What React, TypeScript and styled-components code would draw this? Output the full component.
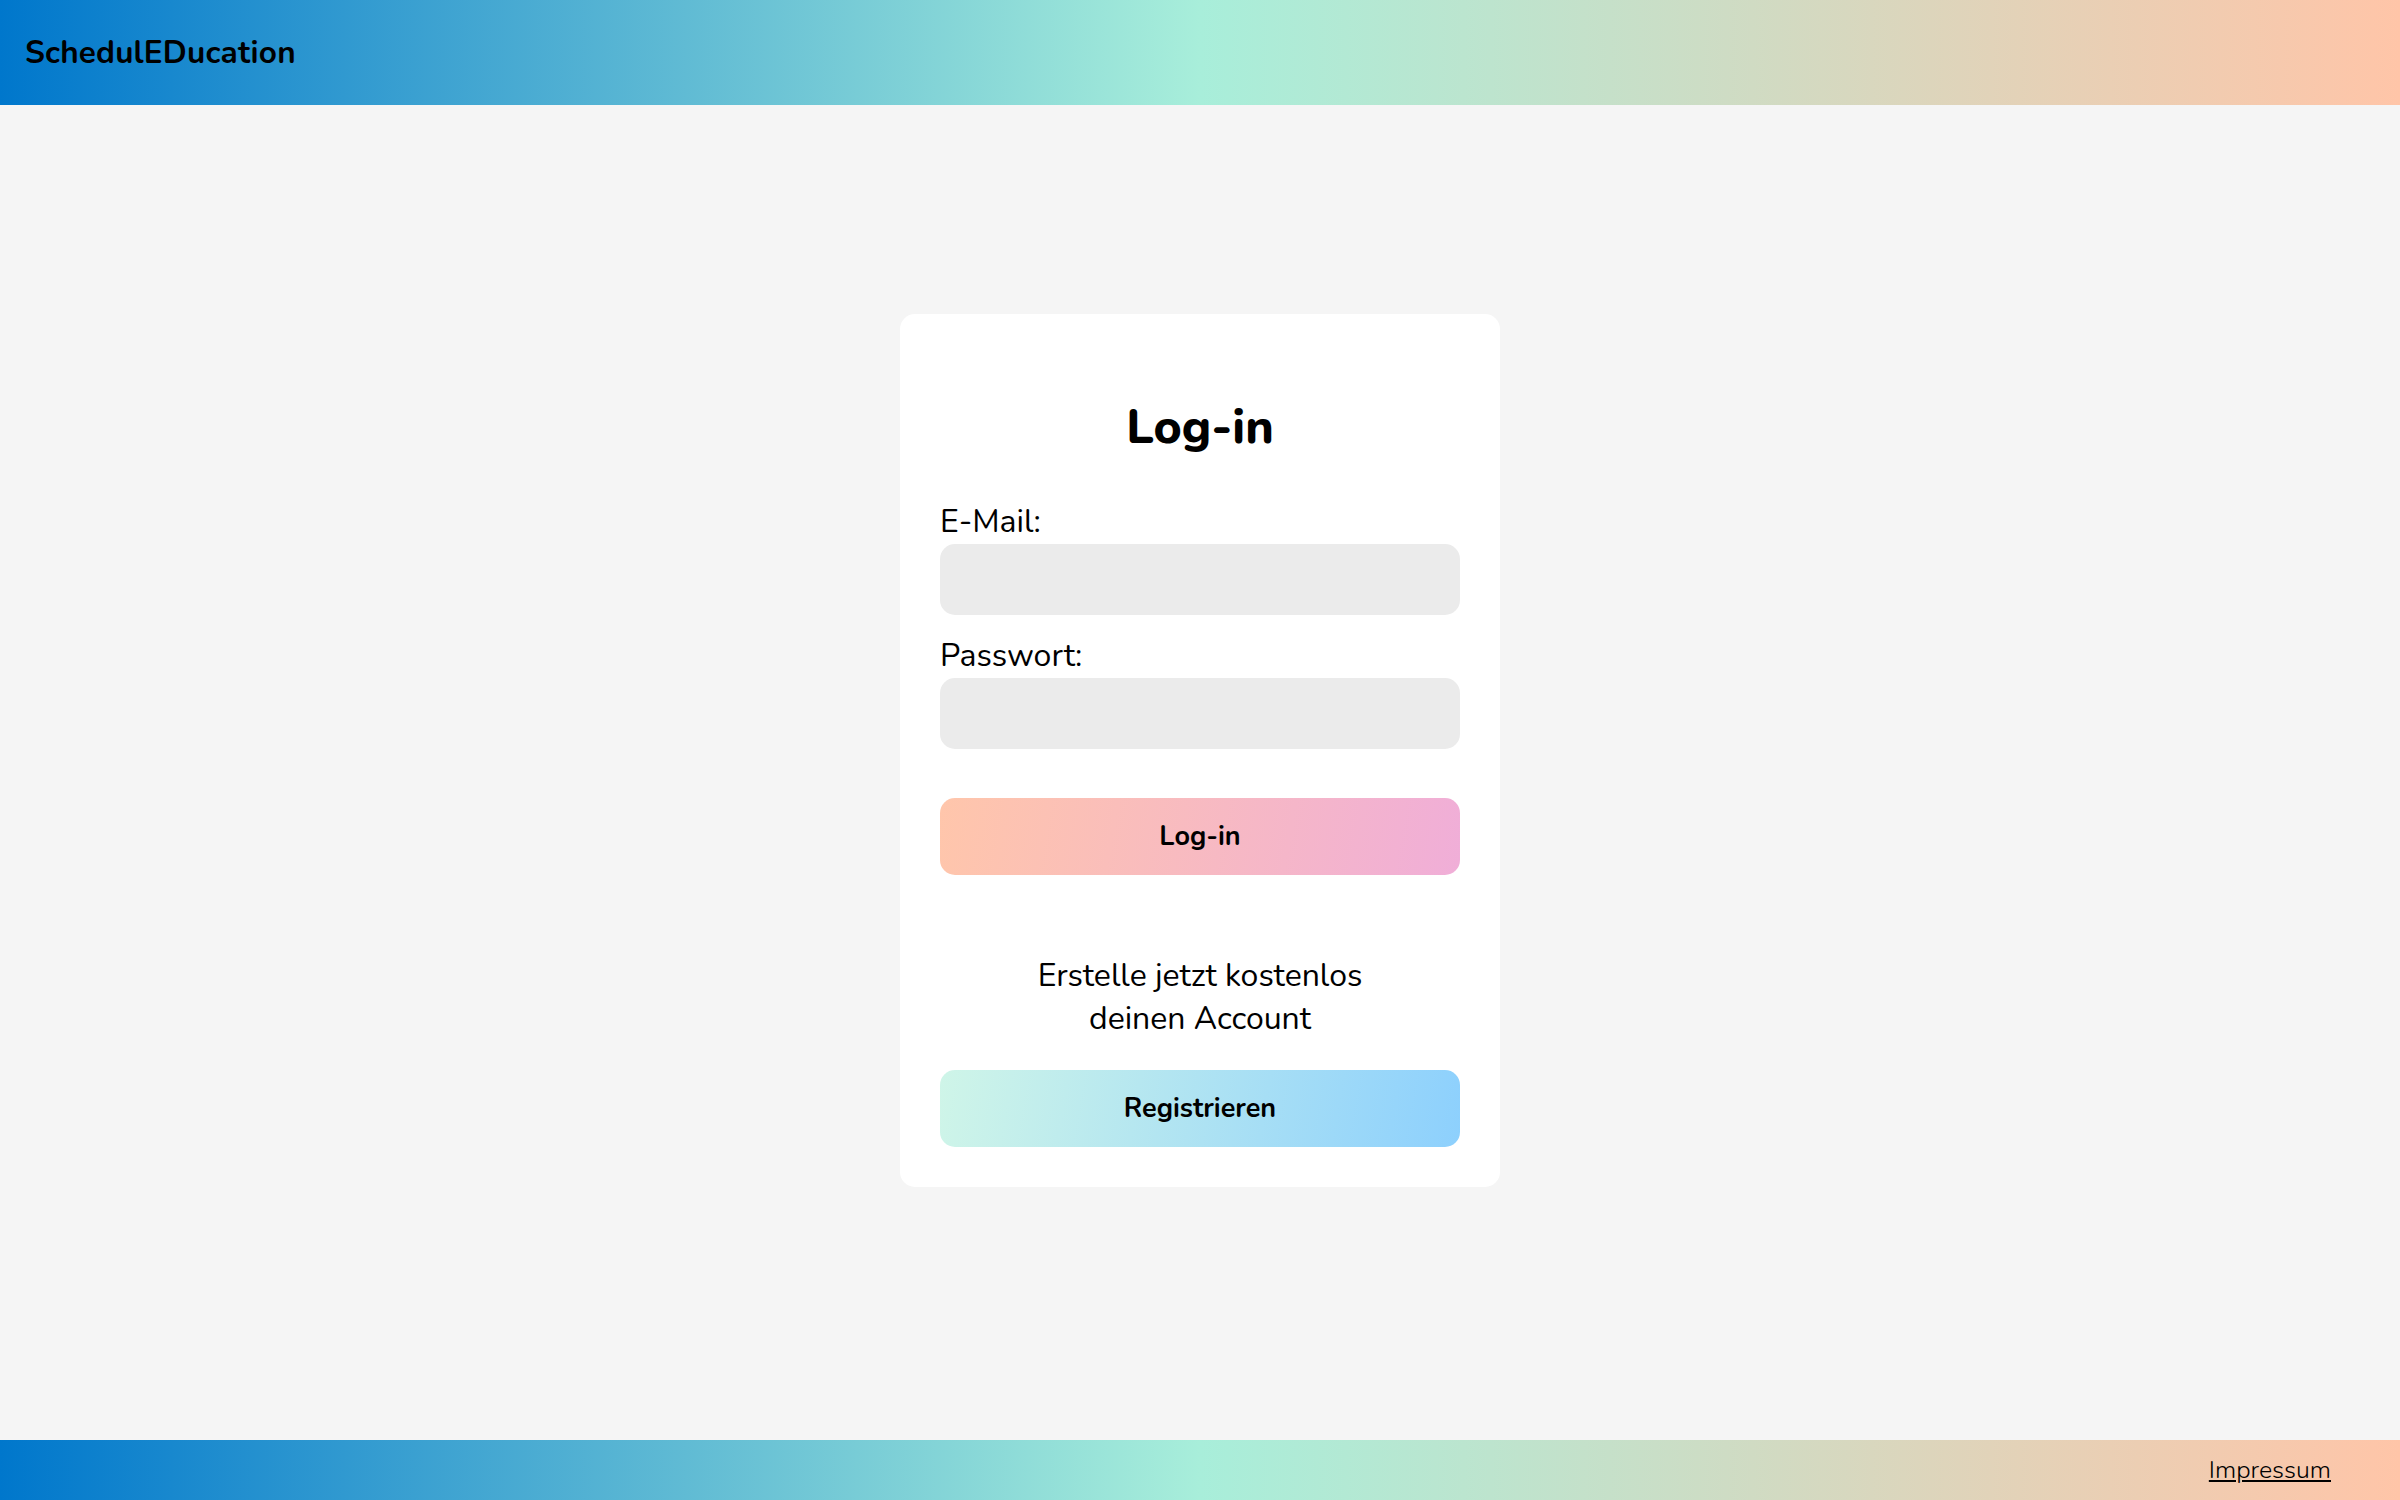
import styled, { createGlobalStyle } from 'styled-components';

const GlobalStyle = createGlobalStyle`
  html, body {
    margin: 0;
    padding: 0;
  }
  body {
    font-family: 'Nunito', 'Lato', 'Noto Sans', sans-serif;
    background-color: #f5f5f5;
    color: #000;
  }
  * {
    box-sizing: border-box;
  }
`;

const brandGradient = 'linear-gradient(to right, #0077cc 0%, #a8eeda 50%, #ffc5a8 100%)';

const Page = styled.div`
  min-height: 100vh;
  display: flex;
  flex-direction: column;
`;

const Header = styled.header`
  height: 105px;
  background: ${brandGradient};
  display: flex;
  align-items: center;
  padding: 0 25px;
`;

const Brand = styled.div`
  font-size: 31.5px;
  font-weight: 700;
  letter-spacing: 0.2px;
`;

const Main = styled.main`
  flex: 1;
  display: flex;
  justify-content: center;
  align-items: center;
  padding-bottom: 45px;
`;

const Card = styled.div`
  width: 600px;
  background-color: #fff;
  border-radius: 15px;
  padding: 40px;
  display: flex;
  flex-direction: column;
`;

const Title = styled.h1`
  font-size: 48px;
  line-height: 58px;
  font-weight: 800;
  text-align: center;
  margin: 44px 0 48px;
`;

const Label = styled.label`
  font-size: 32px;
  line-height: 36px;
  margin-bottom: 4px;
`;

const Input = styled.input<{ $last?: boolean }>`
  height: 71px;
  border: none;
  border-radius: 15px;
  background-color: #ebebeb;
  padding: 0 20px;
  font-size: 26px;
  font-family: inherit;
  outline: none;
  margin-bottom: ${({ $last }) => ($last ? '49px' : '23px')};
`;

const Button = styled.button<{ $variant: 'login' | 'register' }>`
  height: 77px;
  border: none;
  border-radius: 15px;
  font-family: inherit;
  font-size: 27px;
  font-weight: 700;
  color: #000;
  cursor: pointer;
  background: ${({ $variant }) =>
    $variant === 'login'
      ? 'linear-gradient(100deg, #ffc6ab 0%, #f0aed8 100%)'
      : 'linear-gradient(100deg, #cff5e8 0%, #8dd0fd 100%)'};
`;

const Invite = styled.p`
  font-size: 32px;
  line-height: 43px;
  text-align: center;
  margin: 79px 0 30px;
`;

const Footer = styled.footer`
  height: 60px;
  background: ${brandGradient};
  display: flex;
  align-items: center;
  justify-content: flex-end;
  padding: 0 69px;
`;

const FooterLink = styled.a`
  font-size: 25px;
  font-weight: 300;
  color: #000;
  text-decoration: underline;
`;

const App = () => {
  return (
    <Page>
      <GlobalStyle />
      <Header>
        <Brand>SchedulEDucation</Brand>
      </Header>

      <Main>
        <Card>
          <Title>Log-in</Title>
          <Label htmlFor="email">E-Mail:</Label>
          <Input id="email" type="email" />
          <Label htmlFor="password">Passwort:</Label>
          <Input id="password" type="password" $last />
          <Button $variant="login">Log-in</Button>

          <Invite>
            Erstelle jetzt kostenlos
            <br />
            deinen Account
          </Invite>
          <Button $variant="register">Registrieren</Button>
        </Card>
      </Main>

      <Footer>
        <FooterLink href="#">Impressum</FooterLink>
      </Footer>
    </Page>
  );
};

export default App;
